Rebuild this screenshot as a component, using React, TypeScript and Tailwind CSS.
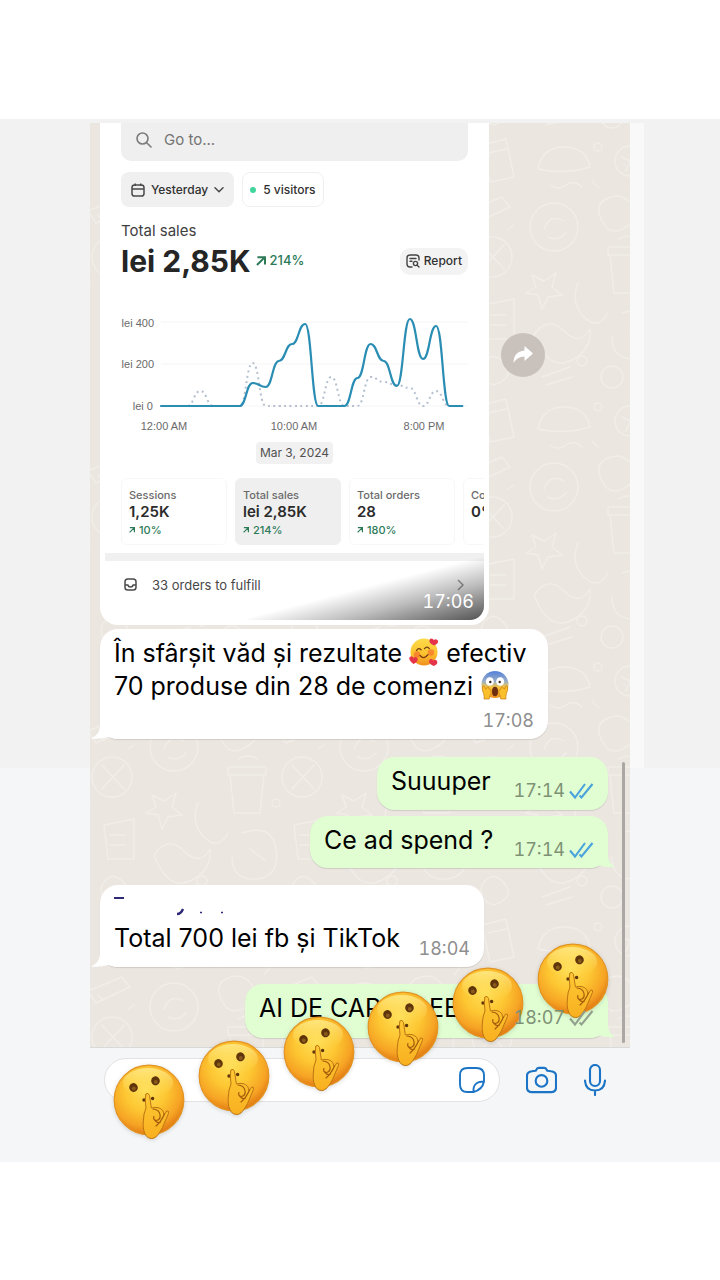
import type { ReactNode } from "react";

const HOURS_STEP = 13.1;
const CHART_LEFT = 40;
const BASE = 96;

const today = [
  96, 96, 96, 96, 96, 96, 96, 73, 77, 51, 34, 14, 96, 96, 96, 68, 34, 51, 76, 9, 49, 16, 96, 96,
];
const previous = [
  96, 96, 96, 81, 96, 96, 96, 53, 96, 96, 96, 96, 96, 67, 96, 96, 67, 72, 75, 78, 96, 81, 96, 96,
];

function smoothPath(values: number[]) {
  return values
    .map((y, i) => {
      const x = CHART_LEFT + i * HOURS_STEP;
      if (i === 0) return `M${x} ${y}`;
      const px = x - HOURS_STEP;
      const mid = px + HOURS_STEP / 2;
      return `C${mid} ${values[i - 1]} ${mid} ${y} ${x} ${y}`;
    })
    .join(" ");
}

function SalesChart() {
  return (
    <svg viewBox="0 0 347 124" className="mt-8 block w-full" role="img" aria-label="Total sales by hour">
      {[12, 54, BASE].map((y) => (
        <line key={y} x1="40" x2="347" y1={y} y2={y} stroke="#f5f5f5" strokeWidth="1" />
      ))}
      <path d={smoothPath(previous)} fill="none" stroke="#b3c0d0" strokeWidth="2" strokeDasharray="2 3.4" />
      <path d={smoothPath(today)} fill="none" stroke="#2a8db3" strokeWidth="2.2" strokeLinecap="round" />
      <g fill="#6a6a6a" fontSize="11" fontFamily="Liberation Sans, Arial, sans-serif">
        <text x="33" y="17" textAnchor="end">lei 400</text>
        <text x="33" y="58" textAnchor="end">lei 200</text>
        <text x="32" y="100" textAnchor="end">lei 0</text>
        <text x="43" y="120" textAnchor="middle">12:00 AM</text>
        <text x="173" y="120" textAnchor="middle">10:00 AM</text>
        <text x="303" y="120" textAnchor="middle">8:00 PM</text>
      </g>
    </svg>
  );
}

function Growth({ size = 9 }: { size?: number }) {
  return (
    <svg width={size} height={size} viewBox="0 0 10 10" fill="none" stroke="currentColor" strokeWidth="2" aria-hidden="true">
      <path d="M1 9L8.600 1.400M1.400 1.200H9V8.600" />
    </svg>
  );
}

function Wallpaper() {
  return (
    <svg className="absolute inset-0 h-full w-full" aria-hidden="true">
      <defs>
        <pattern id="doodles" width="190" height="260" patternUnits="userSpaceOnUse" x="52" y="10">
          <g fill="none" stroke="#f1ede8" strokeWidth="1.4" strokeLinecap="round" strokeLinejoin="round">
            <path d="M16 36q4-22 26-22t26 20q-26 8-52 2zM28 52q8 6 16 0t16 2" />
            <circle cx="108" cy="28" r="15" />
            <path d="M100 24l16 8M104 38l8-18" />
            <path d="M150 12l24-6 8 38-24 5zM156 20l18-4" />
            <circle cx="32" cy="94" r="24" />
            <path d="M22 96q6-16 20-8M26 104q10 5 18-4" />
            <path d="M84 66q16-8 26 6t-6 22q-16 10-24-6t4-22z" />
            <path d="M136 78l34-14 8 10-34 16zM146 82l6 6" />
            <path d="M88 122h34l-4 38H92zM86 114h38v8H86zM96 106q10-6 20 0" />
            <circle cx="160" cy="124" r="20" />
            <path d="M150 112l22 24M172 112l-22 24" />
            <path d="M10 142l12 6 12-8-4 14 10 8-14 2-6 12-4-14-12-2 10-6z" />
            <path d="M56 150q-8 20 6 34t24-4" />
            <path d="M12 202q14-20 30-4t26-2q2 22-20 32T12 202z" />
            <path d="M100 180q30-10 34 16t-18 30q-26 2-26-22M108 196l16 12" />
            <path d="M152 172l30-6v40h-26zM158 182h16M158 192h16" />
            <circle cx="90" cy="244" r="11" />
            <path d="M150 232q10-16 22-2t-10 22q-16-4-12-20zM20 244l28-10M24 252l26-8" />
            <circle cx="134" cy="150" r="4" />
            <circle cx="76" cy="14" r="4" />
            <circle cx="60" cy="228" r="5" />
            <path d="M70 48l6 6M128 54l-6 8M182 92l-6 4M130 238l6 6" />
          </g>
        </pattern>
      </defs>
      <rect width="100%" height="100%" fill="url(#doodles)" />
    </svg>
  );
}

function Ticks({ className }: { className: string }) {
  return (
    <svg width="25" height="18" viewBox="0 0 25 18" fill="none" stroke="currentColor" strokeWidth="2.1" className={className} aria-hidden="true">
      <path d="M1 9.500L6 15.500L16 2M10.500 13.500L12.500 15.500L23.500 2" />
    </svg>
  );
}

function HeartsFace() {
  return (
    <svg width="30" height="30" viewBox="0 0 30 30" className="inline-block align-[-5px]" role="img" aria-label="smiling face with hearts">
      <circle cx="15" cy="15" r="13.500" fill="url(#skin)" />
      <path d="M7.500 13.500q2-3.400 4.600-.8M15.500 11.600q2.600-3 4.800 0" fill="none" stroke="#6f3d10" strokeWidth="1.300" strokeLinecap="round" />
      <circle cx="8" cy="17.500" r="3.200" fill="#f5622d" opacity=".6" />
      <circle cx="22" cy="15.500" r="3.200" fill="#f5622d" opacity=".6" />
      <path d="M11 18.500q4 4.500 8-.8" fill="none" stroke="#7a3a10" strokeWidth="1.300" strokeLinecap="round" />
      <path d="M25 8.500Q18.600 5.600 21 2q2.400-1.600 3.800 1 2.800-2 4.200.8.600 3.200-4 4.700z" fill="#e5344a" />
      <path d="M4.500 27Q-1 22.800.7 20q2.400-2 3.800.7 3-1.600 4.300 1 .3 3.400-4.300 5.300z" fill="#e5344a" />
      <path d="M24.500 29q-6-3-4-6.300 2.300-1.700 3.800.8 2.700-1.900 4 .9.500 3.300-3.800 4.600z" fill="#e5344a" />
    </svg>
  );
}

function ScreamFace() {
  return (
    <svg width="30" height="30" viewBox="0 0 30 30" className="inline-block align-[-5px]" role="img" aria-label="face screaming in fear">
      <circle cx="15" cy="14.500" r="13.500" fill="url(#fear)" />
      <ellipse cx="9.800" cy="11.500" rx="4" ry="4.300" fill="#fff" />
      <ellipse cx="20.200" cy="11.500" rx="4" ry="4.300" fill="#fff" />
      <circle cx="10.300" cy="12" r="1.200" fill="#3b2a1c" />
      <circle cx="19.700" cy="12" r="1.200" fill="#3b2a1c" />
      <ellipse cx="15" cy="21.500" rx="3" ry="4.800" fill="#6d2d10" />
      <path d="M2.500 16.500q1.500-1.500 2.200.5l1 2.200 2-2.400q1.800 0 1.200 2l2 1q.8 4-1 6l-.7 3.200H4q.6-3-.5-5.500-1.800-4-1-7z" fill="#f9c02c" stroke="#c97a12" strokeWidth=".7" />
      <path d="M27.500 16.500q-1.500-1.500-2.200.5l-1 2.200-2-2.400q-1.800 0-1.200 2l-2 1q-.8 4 1 6l.7 3.200H26q-.6-3 .5-5.500 1.800-4 1-7z" fill="#f9c02c" stroke="#c97a12" strokeWidth=".7" />
    </svg>
  );
}

function EmojiPaints() {
  return (
    <svg width="0" height="0" className="absolute" aria-hidden="true">
      <defs>
        <linearGradient id="skin" x1="0" y1="0" x2="0" y2="1">
          <stop offset="0" stopColor="#fddb4b" />
          <stop offset=".55" stopColor="#fcc32f" />
          <stop offset="1" stopColor="#f08f1e" />
        </linearGradient>
        <linearGradient id="fear" x1="0" y1="0" x2="0" y2="1">
          <stop offset=".05" stopColor="#5b86d8" />
          <stop offset=".4" stopColor="#9db0c4" />
          <stop offset=".6" stopColor="#f8c63d" />
          <stop offset="1" stopColor="#ee9320" />
        </linearGradient>
        <radialGradient id="shush" cx=".45" cy=".36" r=".66">
          <stop offset="0" stopColor="#ffde56" />
          <stop offset=".45" stopColor="#fdc732" />
          <stop offset=".78" stopColor="#f6a324" />
          <stop offset="1" stopColor="#dd7411" />
        </radialGradient>
        <linearGradient id="gloss" x1="0" y1="0" x2="0" y2="1">
          <stop offset="0" stopColor="#fff3a0" stopOpacity=".7" />
          <stop offset="1" stopColor="#ffe35c" stopOpacity="0" />
        </linearGradient>
        <linearGradient id="hand" x1="0" y1="0" x2="0" y2="1">
          <stop offset="0" stopColor="#fdc934" />
          <stop offset="1" stopColor="#f9b020" />
        </linearGradient>
      </defs>
    </svg>
  );
}

function ShushFace({ className }: { className: string }) {
  return (
    <svg width="72" height="78" viewBox="0 0 72 78" role="img" aria-label="shushing face" className={`absolute drop-shadow-sm ${className}`}>
      <circle cx="36" cy="36" r="34.800" fill="url(#shush)" stroke="#e39420" strokeWidth="1.200" />
      <ellipse cx="35" cy="19" rx="25" ry="15" fill="url(#gloss)" />
      <g fill="#5e350b">
        <ellipse cx="20.500" cy="23.500" rx="4.300" ry="4.500" transform="rotate(-15 20.500 23.500)" />
        <ellipse cx="42.500" cy="16.800" rx="4.300" ry="4.500" transform="rotate(-15 42.500 16.800)" />
        <circle cx="31" cy="36" r="1.700" />
        <circle cx="39.600" cy="34.500" r="1.700" />
      </g>
      <g fill="#8a5a1c">
        <circle cx="20.800" cy="24.600" r="2" />
        <circle cx="42.800" cy="17.900" r="2" />
      </g>
      <path d="M33 44q-1.200-9-.2-14 2.400-2 3.700 1.500l1.900 12.500q7.500-2 11.300 2.500l1.500 4.500 2.500-4q2.800-.5 1.700 2.600l-5.900 14q-3 6-6.600 9.400-4.700 3.400-9.300-.6-4-4.900-3.400-14.400.3-9 2.800-14z" fill="url(#hand)" stroke="#bd7412" strokeWidth="1" strokeLinejoin="round" />
      <path d="M40 45q6 .5 7 5.500t-3.500 6q-3.700-.4-2.600-4M43 62q5-4 8.500-12M41 55q2.500 5 6.500 3" fill="none" stroke="#a35b0c" strokeWidth="1.200" strokeLinecap="round" />
    </svg>
  );
}

function Bubble({ own, tail, className, children }: { own?: boolean; tail?: boolean; className: string; children: ReactNode }) {
  return (
    <div
      className={`relative flex rounded-[18px] px-3.5 shadow-[0_1px_1px_rgba(0,0,0,0.12)] ${
        own ? "self-end bg-[#e0fed2]" : "self-start bg-white"
      } ${className}`}
    >
      {children}
      {tail && !own && (
        <svg width="26" height="22" viewBox="0 0 26 22" className="absolute bottom-0 -left-2.5" fill="#fff" aria-hidden="true">
          <path d="M10 0V10Q9 18 1 21.500Q10 22.500 18 20L26 22V0z" />
        </svg>
      )}
      {tail && own && (
        <svg width="26" height="22" viewBox="0 0 26 22" className="absolute -right-2 bottom-0" fill="#e0fed2" aria-hidden="true">
          <path d="M18 0V10Q18 17 25 20.500Q17 22.500 10 19.500L0 22V0z" />
        </svg>
      )}
    </div>
  );
}

function Metric({ label, value, change, active }: { label: string; value: string; change?: string; active?: boolean }) {
  return (
    <div
      className={`flex h-[67px] w-[106px] shrink-0 flex-col rounded-md border pt-2 pl-[7px] whitespace-nowrap ${
        active ? "border-[#efefef] bg-[#efefef]" : "border-[#f7f7f7] bg-white"
      }`}
    >
      <span className="text-[11px] leading-4 font-medium text-[#6b6b6b]">{label}</span>
      <span className="text-[15px] leading-[18px] font-semibold text-[#2b2b2b]">{value}</span>
      {change && (
        <span className="flex items-center gap-1 text-[11px] leading-[18px] font-medium text-[#2c7a58]">
          <Growth size={6} />
          {change}
        </span>
      )}
    </div>
  );
}

function Dashboard() {
  return (
    <div className="relative z-10 mr-[141px] ml-2.5 overflow-hidden rounded-b-[18px] bg-white px-[5px] pb-[5px] text-[#303030]">
      <div className="relative overflow-hidden rounded-b-[14px]">
        <div className="px-4">
          <label className="flex h-[38px] items-center gap-3 rounded-b-[10px] bg-[#efefef] pb-1 pl-[15px]">
            <svg width="16" height="16" viewBox="0 0 16 16" fill="none" stroke="#7c7c7c" strokeWidth="1.600" strokeLinecap="round" aria-hidden="true">
              <circle cx="6.500" cy="6.500" r="5.500" />
              <path d="M10.700 10.700L15 15" />
            </svg>
            <input aria-label="Go to" placeholder="Go to..." className="min-w-0 flex-1 bg-transparent text-[15px] outline-none placeholder:text-[#747474]" />
          </label>
          <div className="mt-[11px] flex gap-2 text-[12px] font-medium">
            <button className="flex h-[35px] items-center gap-1.5 rounded-lg bg-[#f0f0f0] px-2.5">
              <svg width="14" height="14" viewBox="0 0 14 14" fill="none" stroke="#4a4a4a" strokeWidth="1.500" aria-hidden="true">
                <rect x="1" y="2" width="12" height="11" rx="2.600" />
                <path d="M1 6H13M4.200 .5V3M9.800 .5V3" />
              </svg>
              Yesterday
              <svg width="10" height="6" viewBox="0 0 10 6" fill="none" stroke="#4a4a4a" strokeWidth="1.500" strokeLinecap="round" aria-hidden="true">
                <path d="M1 .8L5 4.800L9 .8" />
              </svg>
            </button>
            <button className="flex h-[35px] items-center gap-[7px] rounded-lg border border-[#efefef] bg-white px-[7px]">
              <span className="size-[6px] rounded-full bg-[#3fd59b]" />5 visitors
            </button>
          </div>
          <h2 className="mt-3.5 text-[15px] leading-5 text-[#404040]">Total sales</h2>
          <div className="mt-[3px] flex h-[34px] items-center">
            <strong className="text-[30px] leading-8 font-bold text-[#252525]">lei 2,85K</strong>
            <span className="ml-[5px] flex items-center gap-1 text-[13px] font-medium text-[#2c7a58]">
              <Growth size={10} />
              214%
            </span>
            <button className="ml-auto flex h-[27px] items-center gap-1 rounded-[10px] bg-[#f3f3f3] px-1.5 text-[12px] font-medium">
              <svg width="14" height="14" viewBox="0 0 14 14" fill="none" stroke="#444" strokeWidth="1.400" strokeLinecap="round" aria-hidden="true">
                <path d="M13 6V4q0-3-3-3H4Q1 1 1 4v6q0 3 3 3h2M4 4.500h6M4 7.300h2" />
                <circle cx="9.500" cy="9.500" r="2.100" />
                <path d="M11.200 11.200L13 13" />
              </svg>
              Report
            </button>
          </div>
          <SalesChart />
          <div className="mt-2 flex justify-center">
            <span className="rounded bg-[#f1f1f1] px-1 text-[12px] leading-[22px] text-[#505050]">Mar 3, 2024</span>
          </div>
        </div>
        <div className="mt-3.5 flex gap-2 overflow-hidden pl-4">
          <Metric label="Sessions" value="1,25K" change="10%" />
          <Metric label="Total sales" value="lei 2,85K" change="214%" active />
          <Metric label="Total orders" value="28" change="180%" />
          <Metric label="Conversion" value="0%" />
        </div>
        <div className="mt-2 h-2 bg-[#f0f0f0]" />
        <div className="flex h-[59px] gap-[15px] pt-3 pr-5 pl-[19px] text-[13px] leading-6 text-[#484848]">
          <svg width="13" height="13" viewBox="0 0 13 13" className="mt-[5px]" fill="none" stroke="#4a4a4a" strokeWidth="1.500" aria-hidden="true">
            <rect x="1" y="1" width="11" height="11" rx="2.800" />
            <path d="M1 7h2.800q.5 2 2.700 2t2.700-2H12" />
          </svg>
          33 orders to fulfill
          <svg width="7" height="12" viewBox="0 0 7 12" className="mt-1.5 ml-auto" fill="none" stroke="#9c9c9c" strokeWidth="1.500" aria-hidden="true">
            <path d="M1 1L6 6L1 11" />
          </svg>
        </div>
        <div className="absolute right-0 bottom-0 h-[62px] w-[236px] bg-[linear-gradient(to_bottom_right,transparent_48%,rgba(0,0,0,0.26)_70%,rgba(0,0,0,0.68)_100%)]" />
        <time className="absolute right-2.5 bottom-1.5 text-[18px] leading-6 tabular-nums text-white">17:06</time>
      </div>
    </div>
  );
}

export default function App() {
  return (
    <div className="min-h-screen bg-white pt-[119px] font-['Inter','Noto_Sans',sans-serif]">
      <EmojiPaints />
      <main className="relative bg-[linear-gradient(#f2f2f2_649px,#f5f6f7_649px)] pt-1 pb-[60px]">
        <div className="flex">
          <div className="w-1/8 shrink-0" />
          <section className="relative min-w-0 flex-1 bg-[#ebe6e0]">
            <Wallpaper />
            <div className="relative">
              <Dashboard />
              <button aria-label="Forward" className="absolute top-[210px] right-[85px] grid size-11 place-items-center rounded-full bg-[#c9c1bc]">
                <svg width="22" height="20" viewBox="0 0 22 20" fill="#fff" aria-hidden="true">
                  <path d="M12.500 1L21 8.500L12.500 16V11.500Q5 11.500 1.500 18Q1.500 6.500 12.500 5.500z" />
                </svg>
              </button>
            </div>
            <div className="relative mt-1 flex flex-col pr-[22px] pb-[9px] pl-2.5 text-[25px] leading-[33px] text-black">
              <Bubble tail className="h-[110px] w-[448px] flex-col pt-2">
                <p className="relative z-10 whitespace-nowrap">
                  În sfârșit văd și rezultate <HeartsFace /> efectiv
                  <br />
                  70 produse din 28 de comenzi <ScreamFace />
                </p>
                <time className="mt-1.5 self-end text-[18px] leading-6 tabular-nums text-[#8e8e8e]">17:08</time>
              </Bubble>
              <Bubble own className="mt-[18px] h-[53px] w-[231px] pt-2">
                <p>Suuuper</p>
                <time className="mt-3.5 ml-auto text-[18px] leading-6 tabular-nums text-[#7e9175]">17:14</time>
                <Ticks className="mt-[17px] ml-1 text-[#4aa3dc]" />
              </Bubble>
              <Bubble own tail className="mt-1.5 h-[52px] w-[298px] pt-2">
                <p>Ce ad spend ?</p>
                <time className="relative z-10 mt-3.5 ml-auto text-[18px] leading-6 tabular-nums text-[#7e9175]">17:14</time>
                <Ticks className="relative z-10 mt-[17px] ml-1 text-[#4aa3dc]" />
              </Bubble>
              <Bubble tail className="mt-[17px] h-[82px] w-[384px] items-end pb-3">
                <svg width="112" height="22" viewBox="0 0 112 22" className="absolute top-2.5 left-3.5" fill="none" stroke="#2f2a78" aria-hidden="true">
                  <path d="M0 3H10" strokeWidth="2" />
                  <path d="M63 19q4 0 6-5" strokeWidth="2.400" />
                  <path d="M86 17.500h2M107 17.500h2" strokeWidth="1.600" />
                </svg>
                <p className="relative z-10">Total 700 lei fb și TikTok</p>
                <time className="-mb-1.5 ml-auto text-[18px] leading-6 tabular-nums text-[#8e8e8e]">18:04</time>
              </Bubble>
              <Bubble own tail className="mt-[17px] h-[54px] w-[363px] pt-2">
                <p className="flex flex-1 gap-12">
                  <span>AI DE CAP</span>
                  <span>EE</span>
                </p>
                <time className="relative z-10 mt-3.5 text-[18px] leading-6 tabular-nums text-[#7e9175]">18:07</time>
                <Ticks className="relative z-10 mt-[17px] ml-1 text-[#93a08d]" />
              </Bubble>
            </div>
            <div className="absolute right-[5px] bottom-1 h-[281px] w-[3px] rounded-full bg-[#aaa7a4]" />
          </section>
          <div className="w-1/8 shrink-0">
            <div className="h-[645px] w-3.5 bg-[#f9f9f9]" />
          </div>
        </div>
        <form className="mx-[12.5%] flex items-center border-t border-[#d9d9d9] pt-2.5 pr-6 pl-3.5 text-[#1b74c5]">
          <div className="flex h-11 min-w-0 flex-1 items-center rounded-full border border-[#e2e2e2] bg-white pr-3.5 pl-4">
            <input aria-label="Message" className="min-w-0 flex-1 bg-transparent text-[20px] text-black outline-none" />
            <button type="button" aria-label="Stickers">
              <svg width="26" height="26" viewBox="0 0 26 26" className="block" fill="none" stroke="currentColor" strokeWidth="1.900" strokeLinejoin="round">
                <path d="M14.500 25H8.500Q1 25 1 17.500V8.500Q1 1 8.500 1H17.500Q25 1 25 8.500V14.500Q23.500 22.500 14.500 25zM14.500 25Q13.500 14.500 25 14.500" />
              </svg>
            </button>
          </div>
          <button type="button" aria-label="Camera" className="ml-[26px]">
            <svg width="31" height="28" viewBox="0 0 32 28" className="block" fill="none" stroke="currentColor" strokeWidth="2.200" strokeLinejoin="round">
              <path d="M10 4.500Q11.500 1.500 13 1.500H19Q20.500 1.500 22 4.500L26 5Q31 5.500 31 10V21.500Q31 26.500 26 26.500H6Q1 26.500 1 21.500V10Q1 5.500 6 5z" />
              <circle cx="16" cy="15" r="6" />
            </svg>
          </button>
          <button type="button" aria-label="Voice message" className="ml-[27px]">
            <svg width="22" height="32" viewBox="0 0 22 32" className="block" fill="none" stroke="currentColor" strokeWidth="2.100" strokeLinecap="round">
              <rect x="6" y="1" width="10" height="21" rx="5" />
              <path d="M1 16.500Q1.500 26.500 11 26.500T21 16.500M11 26.500V31" />
            </svg>
          </button>
        </form>
        <ShushFace className="top-[945px] left-[113px]" />
        <ShushFace className="top-[921px] left-[198px]" />
        <ShushFace className="top-[897px] left-[283px]" />
        <ShushFace className="top-[872px] left-[367px]" />
        <ShushFace className="top-[848px] left-[452px]" />
        <ShushFace className="top-[824px] left-[537px]" />
      </main>
    </div>
  );
}
